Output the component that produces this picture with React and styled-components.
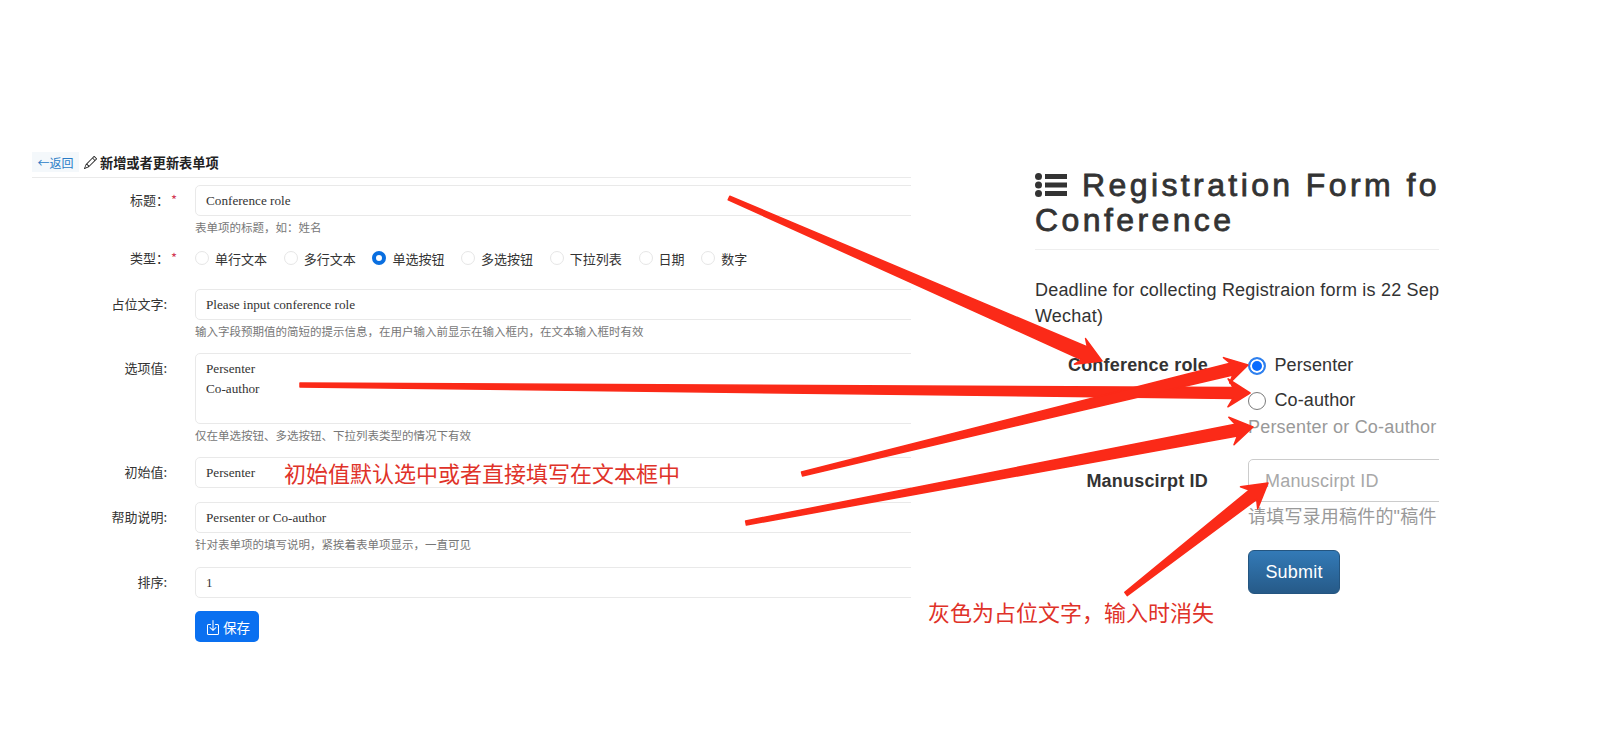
import React from "react";
import styled, { createGlobalStyle } from "styled-components";
import { BsPencil, BsBoxArrowInDown } from "react-icons/bs";

const GlobalStyle = createGlobalStyle`
  html, body {
    margin: 0;
    padding: 0;
    background: #fff;
  }
  body {
    font-family: "Liberation Sans", "Noto Sans CJK SC", sans-serif;
    color: #333;
  }
  * {
    box-sizing: border-box;
  }
`;

const Page = styled.div`
  position: relative;
  display: flex;
  width: 1600px;
  height: 730px;
  padding: 152px 0 0 32px;
  overflow: hidden;
  background: #fff;
`;

/* left half: the form editor */
const EditorPanel = styled.div`
  flex: none;
  width: 879px;
  overflow: hidden;
  font-family: "Noto Sans CJK SC", sans-serif;
`;

const EditorHeader = styled.div`
  display: flex;
  align-items: center;
  height: 26px;
  padding-bottom: 5px;
  border-bottom: 1px solid #eaeaea;
`;

const BackButton = styled.a`
  display: flex;
  align-items: center;
  justify-content: center;
  width: 47px;
  height: 20px;
  background: #f4f8fb;
  color: #2a7cc7;
  font-size: 12px;
`;

const EditorTitle = styled.h3`
  display: flex;
  align-items: center;
  gap: 3px;
  margin: 0 0 0 5px;
  font-size: 13.2px;
  font-weight: 700;
  color: #222;
`;

const Form = styled.div`
  padding-top: 7px;
`;

const Row = styled.div`
  display: flex;
  align-items: flex-start;
  margin-bottom: ${(p) => p.$mb || 13}px;
`;

const FieldLabel = styled.label`
  flex: none;
  width: ${(p) => (p.$req ? 137 : 135)}px;
  padding-top: ${(p) => p.$top ?? 6}px;
  text-align: right;
  font-size: 13px;
  line-height: 18px;
  color: #333;
`;

const Required = styled.span`
  flex: none;
  width: ${(p) => (p.$req ? 26 : 28)}px;
  padding: ${(p) => p.$top ?? 6}px 0 0 2px;
  font-size: 13px;
  line-height: 18px;
  color: #d23a55;
`;

const Field = styled.div`
  flex: 1;
  min-width: 0;
`;

const TextBox = styled.div`
  width: calc(100% + 20px);
  height: ${(p) => p.$h || 31}px;
  padding: ${(p) => (p.$h ? "5px" : "0")} 10px 0;
  border: 1px solid #e9e9e9;
  border-radius: 5px;
  font-family: "Liberation Serif", serif;
  font-size: 13.2px;
  line-height: ${(p) => (p.$h ? "20px" : "30px")};
  color: #333;
`;

const Help = styled.div`
  margin-top: 2px;
  font-size: 11.5px;
  line-height: 18px;
  color: #777;
`;

const TypeOptions = styled.div`
  display: flex;
  align-items: center;
  height: 20px;
  margin-top: -1px;
`;

const TypeOption = styled.span`
  display: flex;
  align-items: center;
  gap: 6px;
  margin-right: 16.7px;
  font-size: 13px;
  color: #333;
`;

const TypeDot = styled.i`
  flex: none;
  width: 14px;
  height: 14px;
  border-radius: 50%;
  border: ${(p) => (p.$on ? "4px solid #0a6fe0" : "1px solid #e6e6e6")};
  background: #fff;
`;

const SaveButton = styled.button`
  display: flex;
  align-items: center;
  gap: 2px;
  width: 64px;
  height: 31px;
  padding: 0 0 0 10px;
  border: 0;
  border-radius: 5px;
  background: #0a70f0;
  color: #fff;
  font-family: "Noto Sans CJK SC", sans-serif;
  font-size: 13.5px;
`;

/* right half: the resulting registration page */
const PreviewPanel = styled.div`
  flex: none;
  width: 404px;
  margin: 16px 0 0 124px;
  overflow: hidden;
  font-size: 18px;
  letter-spacing: 0.2px;
  color: #333;
`;

const PreviewTitle = styled.h1`
  margin: 0;
  padding-bottom: 11px;
  border-bottom: 1px solid #eee;
  font-size: 32px;
  font-weight: 400;
  line-height: 35px;
  letter-spacing: 3.4px;
  white-space: nowrap;
  -webkit-text-stroke: 0.8px #333;
`;

const TitleIcon = styled.svg`
  width: 32px;
  height: 24px;
  margin-right: 15px;
  vertical-align: -1px;
`;

const Notice = styled.p`
  margin: 27px 0 23px;
  line-height: 26px;
  white-space: nowrap;
`;

const PreviewRow = styled.div`
  display: flex;
  align-items: flex-start;
  margin-bottom: ${(p) => p.$mb || 0}px;
`;

const PreviewLabel = styled.label`
  flex: none;
  width: 173px;
  padding-top: ${(p) => p.$top || 0}px;
  margin-right: 40px;
  text-align: right;
  font-weight: 700;
  line-height: 26px;
  white-space: nowrap;
`;

const PreviewField = styled.div`
  flex: none;
  width: 300px;
  margin-top: ${(p) => p.$mt || 0}px;
`;

const RoleOption = styled.div`
  display: flex;
  align-items: center;
  gap: 8.5px;
  height: 35px;
  letter-spacing: 0.1px;
`;

const RoleDot = styled.i`
  flex: none;
  width: 18px;
  height: 18px;
  border-radius: 50%;
  border: ${(p) => (p.$on ? "2px solid #2f80ed" : "1.5px solid #7b7b7b")};
  background: ${(p) => (p.$on ? "#0a6cff" : "#fff")};
  box-shadow: ${(p) => (p.$on ? "inset 0 0 0 2px #fff" : "none")};
`;

const Hint = styled.div`
  margin-top: ${(p) => p.$mt || 0}px;
  line-height: 26px;
  color: #999;
  white-space: nowrap;
`;

const ManuscriptInput = styled.div`
  width: 300px;
  height: 43px;
  padding-left: 16px;
  border: 1px solid #ccc;
  border-radius: 5px;
  line-height: 43px;
  color: #a8a8a8;
`;

const SubmitButton = styled.button`
  display: block;
  width: 92px;
  height: 44px;
  margin-top: 20px;
  border: 1px solid #245580;
  border-radius: 6px;
  background: linear-gradient(#337ab7, #265a88);
  color: #fff;
  font-family: "Liberation Sans", sans-serif;
  font-size: 18px;
  letter-spacing: 0.2px;
`;

/* hand-drawn annotations on top of the screenshot */
const ArrowLayer = styled.svg`
  position: absolute;
  inset: 0;
  width: 1600px;
  height: 730px;
  pointer-events: none;
`;

const Note = styled.div`
  position: absolute;
  left: ${(p) => p.$x}px;
  top: ${(p) => p.$y}px;
  font-family: "Noto Sans CJK SC", sans-serif;
  font-size: 22px;
  line-height: 30px;
  color: #df3229;
  white-space: nowrap;
`;

const arrowPoints = ([x1, y1], [x2, y2], shaft = 12, headL = 24, headW = 32) => {
  const len = Math.hypot(x2 - x1, y2 - y1);
  const ux = (x2 - x1) / len;
  const uy = (y2 - y1) / len;
  const at = (back, side) => `${(x2 - ux * back - uy * side).toFixed(1)},${(y2 - uy * back + ux * side).toFixed(1)}`;
  return [
    at(len, -2),
    at(headL - 5, -shaft / 2),
    at(headL, -headW / 2),
    "" + x2 + "," + y2,
    at(headL, headW / 2),
    at(headL - 5, shaft / 2),
    at(len, 2),
  ].join(" ");
};

const arrows = [
  { from: [729, 198], to: [1102, 361], shaft: 14, headL: 24, headW: 28 },
  { from: [300, 385], to: [1250, 393], shaft: 11, headL: 22, headW: 28 },
  { from: [802, 474], to: [1248, 365], shaft: 12, headL: 22, headW: 26 },
  { from: [746, 523], to: [1253, 427], shaft: 12, headL: 22, headW: 28 },
  { from: [1126, 594], to: [1268, 483], shaft: 12, headL: 24, headW: 28 },
];

const types = ["单行文本", "多行文本", "单选按钮", "多选按钮", "下拉列表", "日期", "数字"];

export default function App() {
  return (
    <Page>
      <GlobalStyle />

      <EditorPanel>
        <EditorHeader>
          <BackButton>←返回</BackButton>
          <EditorTitle>
            <BsPencil size={13} />
            新增或者更新表单项
          </EditorTitle>
        </EditorHeader>

        <Form>
          <Row>
            <FieldLabel $req>标题：</FieldLabel>
            <Required $req>*</Required>
            <Field>
              <TextBox>Conference role</TextBox>
              <Help>表单项的标题，如：姓名</Help>
            </Field>
          </Row>
          <Row $mb={21}>
            <FieldLabel $req $top={0}>类型：</FieldLabel>
            <Required $req $top={0}>*</Required>
            <Field>
              <TypeOptions>
                {types.map((t) => (
                  <TypeOption key={t}>
                    <TypeDot $on={t === "单选按钮"} />
                    {t}
                  </TypeOption>
                ))}
              </TypeOptions>
            </Field>
          </Row>
          <Row>
            <FieldLabel>占位文字:</FieldLabel>
            <Required />
            <Field>
              <TextBox>Please input conference role</TextBox>
              <Help>输入字段预期值的简短的提示信息，在用户输入前显示在输入框内，在文本输入框时有效</Help>
            </Field>
          </Row>
          <Row>
            <FieldLabel>选项值:</FieldLabel>
            <Required />
            <Field>
              <TextBox $h={71}>
                Persenter
                <br />
                Co-author
              </TextBox>
              <Help>仅在单选按钮、多选按钮、下拉列表类型的情况下有效</Help>
            </Field>
          </Row>
          <Row $mb={14}>
            <FieldLabel>初始值:</FieldLabel>
            <Required />
            <Field>
              <TextBox>Persenter</TextBox>
            </Field>
          </Row>
          <Row $mb={14}>
            <FieldLabel>帮助说明:</FieldLabel>
            <Required />
            <Field>
              <TextBox>Persenter or Co-author</TextBox>
              <Help>针对表单项的填写说明，紧挨着表单项显示，一直可见</Help>
            </Field>
          </Row>
          <Row>
            <FieldLabel>排序:</FieldLabel>
            <Required />
            <Field>
              <TextBox>1</TextBox>
            </Field>
          </Row>
          <Row>
            <FieldLabel />
            <Required />
            <Field>
              <SaveButton>
                <BsBoxArrowInDown size={16} />
                保存
              </SaveButton>
            </Field>
          </Row>
        </Form>
      </EditorPanel>

      <PreviewPanel>
        <PreviewTitle>
          <TitleIcon viewBox="0 0 32 24" fill="#333">
            <circle cx="3.5" cy="3.5" r="3.5" />
            <circle cx="3.5" cy="12" r="3.5" />
            <circle cx="3.5" cy="20.5" r="3.5" />
            <rect x="10" y="1" width="22" height="5" />
            <rect x="10" y="9.5" width="22" height="5" />
            <rect x="10" y="18" width="22" height="5" />
          </TitleIcon>
          Registration Form fo
          <br />
          Conference
        </PreviewTitle>

        <Notice>
          Deadline for collecting Registraion form is 22 Sep
          <br />
          Wechat)
        </Notice>

        <PreviewRow $mb={19}>
          <PreviewLabel>Conference role</PreviewLabel>
          <PreviewField $mt={-4}>
            <RoleOption>
              <RoleDot $on />
              Persenter
            </RoleOption>
            <RoleOption>
              <RoleDot />
              Co-author
            </RoleOption>
            <Hint $mt={-4}>Persenter or Co-author</Hint>
          </PreviewField>
        </PreviewRow>

        <PreviewRow>
          <PreviewLabel $top={9}>Manuscirpt ID</PreviewLabel>
          <PreviewField>
            <ManuscriptInput>Manuscirpt ID</ManuscriptInput>
            <Hint $mt={2}>请填写录用稿件的"稿件</Hint>
            <SubmitButton>Submit</SubmitButton>
          </PreviewField>
        </PreviewRow>
      </PreviewPanel>

      <Note $x={284} $y={457}>初始值默认选中或者直接填写在文本框中</Note>
      <Note $x={928} $y={596}>灰色为占位文字，输入时消失</Note>

      <ArrowLayer viewBox="0 0 1600 730">
        {arrows.map((a, i) => (
          <polygon
            key={i}
            points={arrowPoints(a.from, a.to, a.shaft, a.headL, a.headW)}
            fill="#fb2a18"
            stroke="#fb2a18"
            strokeWidth="1.5"
            strokeLinejoin="round"
          />
        ))}
      </ArrowLayer>
    </Page>
  );
}
